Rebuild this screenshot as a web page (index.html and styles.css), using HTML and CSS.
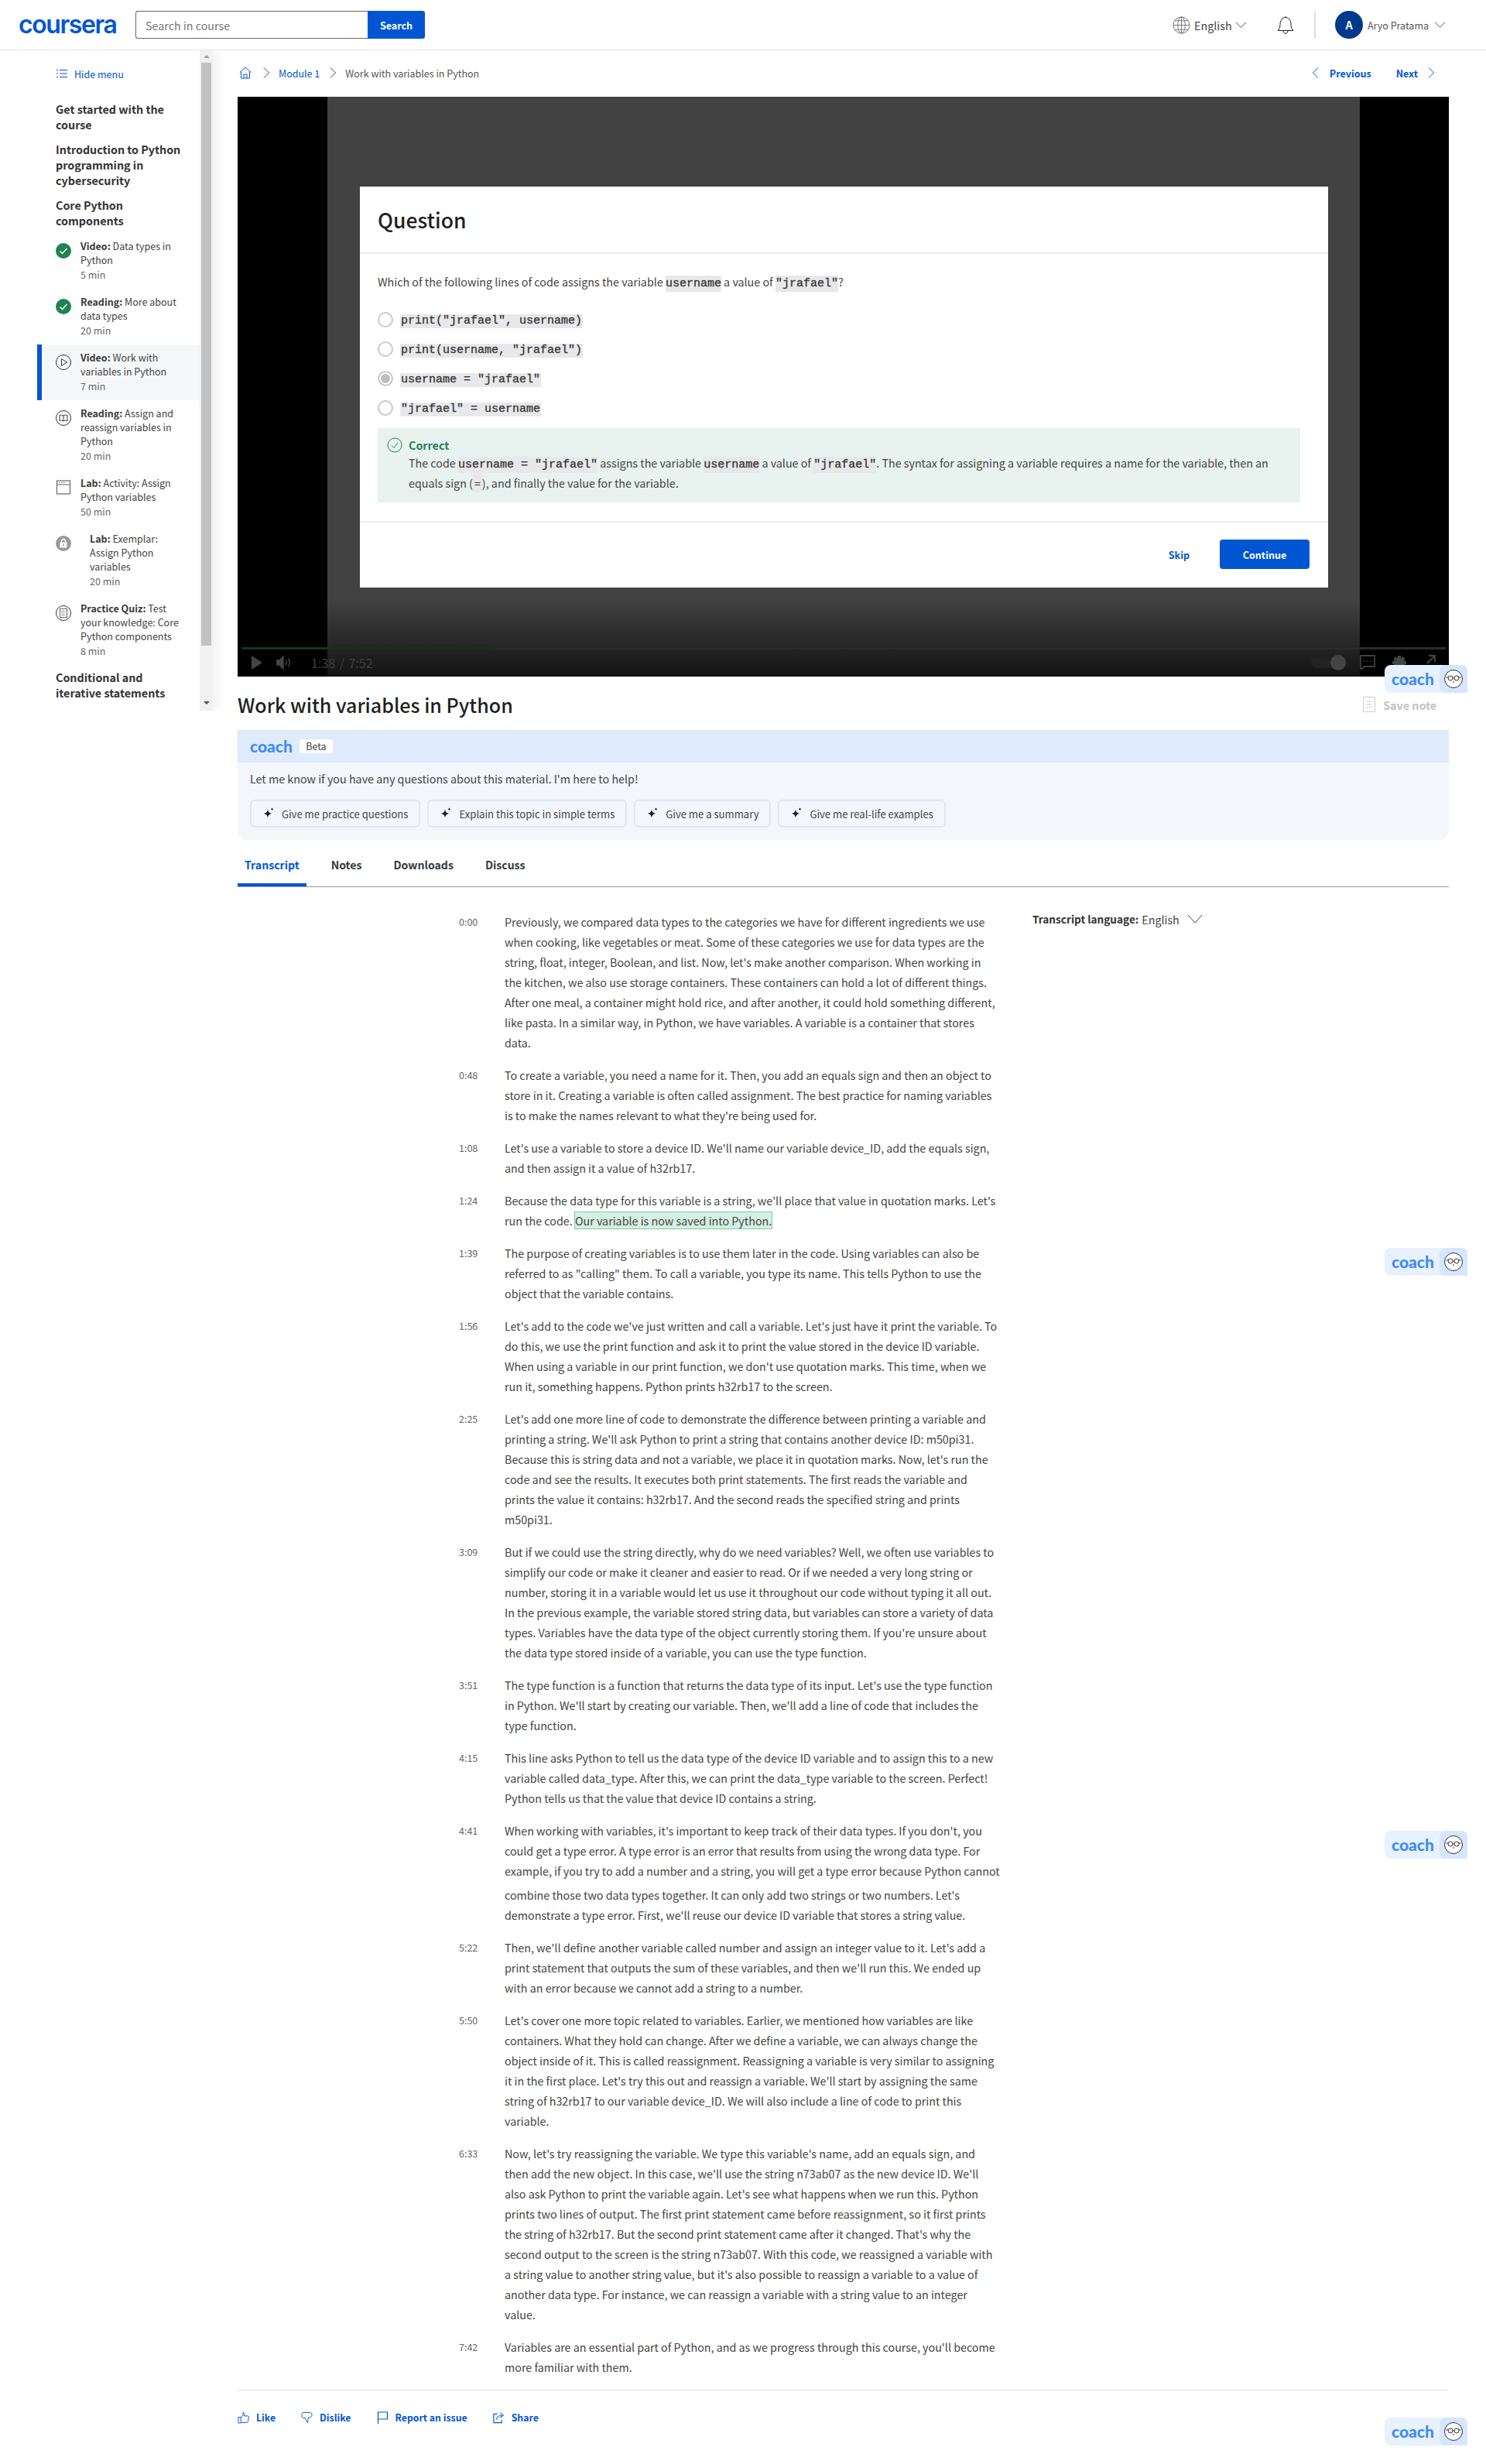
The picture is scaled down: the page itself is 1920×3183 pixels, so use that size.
FILE: index.html
```html
<!DOCTYPE html>
<html lang="en">
<head>
    <meta charset="UTF-8">
    <title>Work with variables in Python | Coursera</title>
    <link rel="stylesheet" href="styles.css">
</head>
<body>
    <!-- Top bar -->
    <header class="topbar">
        <div class="brand">coursera</div>
        <form class="search">
            <input class="search-input" type="text" placeholder="Search in course">
            <button class="search-btn" type="button">Search</button>
        </form>
        <div class="top-right">
            <svg class="globe" viewBox="0 0 24 24" fill="none" stroke="#777" stroke-width="1"><circle cx="12" cy="12" r="11"/><ellipse cx="12" cy="12" rx="5" ry="11"/><path d="M12 1v22M1 12h22M3 6h18M3 18h18"/></svg>
            <span class="lang-name">English</span>
            <svg class="chev-down" viewBox="0 0 16 10" fill="none" stroke="#444"><path d="M1 1.5l7 7 7-7"/></svg>
            <svg class="bell" viewBox="0 0 22 24" fill="none" stroke="#222" stroke-width="1"><path d="M1 19.500h20c-2-2-3-4-3-8 0-5-3-9-7-9s-7 4-7 9c0 4-1 6-3 8zM8 19.500c0 5 6 5 6 0M11 2.500V1"/></svg>
            <span class="top-divider"></span>
            <span class="avatar">A</span>
            <span class="user-name">Aryo Pratama</span>
            <svg class="chev-down" viewBox="0 0 16 10" fill="none" stroke="#444"><path d="M1 1.5l7 7 7-7"/></svg>
        </div>
    </header>

    <div class="layout">
        <!-- Course menu -->
        <aside class="sidebar">
            <nav class="menu">
                <a class="hide-menu">
                    <svg viewBox="0 0 14 12" fill="none" stroke="#0056d2"><path d="M0 1.500h2M0 6h2M0 10.500h2M4 1.500h10M4 6h10M4 10.500h10"/></svg>
                    Hide menu
                </a>
                <h3 class="module first">Get started with the course</h3>
                <h3 class="module">Introduction to Python programming in cybersecurity</h3>
                <h3 class="module">Core Python components</h3>

                <ul class="items">
                    <li class="item">
                        <svg class="item-icon" viewBox="0 0 20 20"><circle cx="10" cy="10" r="10" fill="#1f8354"/><path d="M5.500 10.500l3 3 6-6.500" fill="none" stroke="#fff" stroke-width="1.500"/></svg>
                        <div><b>Video:</b> Data types in Python<span class="dur">5 min</span></div>
                    </li>
                    <li class="item">
                        <svg class="item-icon" viewBox="0 0 20 20"><circle cx="10" cy="10" r="10" fill="#1f8354"/><path d="M5.500 10.500l3 3 6-6.500" fill="none" stroke="#fff" stroke-width="1.500"/></svg>
                        <div><b>Reading:</b> More about data types<span class="dur">20 min</span></div>
                    </li>
                    <li class="item active">
                        <svg class="item-icon" viewBox="0 0 20 20" fill="none" stroke="#333"><circle cx="10" cy="10" r="9.500"/><path d="M7.500 5.500v9l7-4.500z"/></svg>
                        <div><b>Video:</b> Work with variables in Python<span class="dur">7 min</span></div>
                    </li>
                    <li class="item">
                        <svg class="item-icon" viewBox="0 0 20 20" fill="none" stroke="#333"><circle cx="10" cy="10" r="9.500"/><path d="M10 7c-1.500-1-3-1-5-.5v7c2-.5 3.500-.5 5 .5 1.500-1 3-1 5-.5v-7c-2-.5-3.500-.5-5 .5zM10 7v7"/></svg>
                        <div><b>Reading:</b> Assign and reassign variables in Python<span class="dur">20 min</span></div>
                    </li>
                    <li class="item">
                        <svg class="item-icon" viewBox="0 0 20 20" fill="none" stroke="#666" stroke-width="1.200"><rect x="1.500" y="1" width="17" height="17"/><path d="M1.500 6h17M4 3.500h1.500M7 3.500h1.500M10 3.500h1.500"/></svg>
                        <div><b>Lab:</b> Activity: Assign Python variables<span class="dur">50 min</span></div>
                    </li>
                    <li class="item locked">
                        <svg class="item-icon" viewBox="0 0 20 20"><circle cx="10" cy="10" r="10" fill="#999"/><rect x="5.500" y="8.500" width="9" height="7" fill="#fff"/><path d="M7.500 8.500V7a2.500 2.500 0 0 1 5 0v1.500" fill="none" stroke="#fff" stroke-width="1.300"/><rect x="9.300" y="10.500" width="1.400" height="2.500" fill="#999"/></svg>
                        <div><b>Lab:</b> Exemplar: Assign Python variables<span class="dur">20 min</span></div>
                    </li>
                    <li class="item">
                        <svg class="item-icon" viewBox="0 0 20 20" fill="none" stroke="#333"><circle cx="10" cy="10" r="9.500"/><rect x="5.500" y="4.500" width="9" height="11" stroke="#666"/><path d="M7.500 7.500h5M7.500 10h5M7.500 12.500h5" stroke="#666" stroke-dasharray="1.500 .7"/></svg>
                        <div><b>Practice Quiz:</b> Test your knowledge: Core Python components<span class="dur">8 min</span></div>
                    </li>
                </ul>

                <h3 class="module last">Conditional and iterative statements</h3>
            </nav>
            <div class="scrollbar">
                <span class="arrow-up"></span>
                <span class="thumb"></span>
                <span class="arrow-down"></span>
            </div>
        </aside>

        <main class="content">
            <div class="crumbs">
                <svg class="home" viewBox="0 0 16 16" fill="none" stroke="#0056d2"><path d="M.8 7.500L8 1l7.200 6.500M2.500 6.500v8.500h11V6.500M6 15v-5h4v5"/></svg>
                <svg class="chev-right" viewBox="0 0 8 14" fill="none" stroke="#444"><path d="M1 .5l6.500 6.500L1 13.500"/></svg>
                <a class="crumb-link">Module 1</a>
                <svg class="chev-right" viewBox="0 0 8 14" fill="none" stroke="#444"><path d="M1 .5l6.500 6.500L1 13.500"/></svg>
                <span class="crumb-here">Work with variables in Python</span>
                <div class="pager">
                    <svg class="chev-right" viewBox="0 0 8 14" fill="none" stroke="#0056d2"><path d="M7 .5L.5 7 7 13.500"/></svg>
                    <a class="pager-prev">Previous</a>
                    <a class="pager-next">Next</a>
                    <svg class="chev-right" viewBox="0 0 8 14" fill="none" stroke="#0056d2"><path d="M1 .5l6.500 6.500L1 13.500"/></svg>
                </div>
            </div>

            <!-- Video with question over it -->
            <section class="video">
                <div class="stage">
                    <div class="dialog">
                        <h2 class="dialog-title">Question</h2>
                        <div class="dialog-body">
                            <p class="ask">Which of the following lines of code assigns the variable <code>username</code> a value of <code>"jrafael"</code>?</p>
                            <div class="option"><span class="radio"></span><code>print("jrafael", username)</code></div>
                            <div class="option"><span class="radio"></span><code>print(username, "jrafael")</code></div>
                            <div class="option"><span class="radio checked"></span><code>username = "jrafael"</code></div>
                            <div class="option"><span class="radio"></span><code>"jrafael" = username</code></div>
                            <div class="feedback">
                                <svg class="ok" viewBox="0 0 20 20" fill="none" stroke="#1f8354"><circle cx="10" cy="10" r="9"/><path d="M6 10.500l3 3 5-6.500"/></svg>
                                <div>
                                    <div class="ok-title">Correct</div>
                                    <p>The code <code>username = "jrafael"</code> assigns the variable <code>username</code> a value of <code>"jrafael"</code>. The syntax for assigning a variable requires a name for the variable, then an equals sign (<code class="eq">=</code>), and finally the value for the variable.</p>
                                </div>
                            </div>
                        </div>
                        <div class="dialog-foot">
                            <a class="skip">Skip</a>
                            <button class="continue" type="button">Continue</button>
                        </div>
                    </div>
                </div>
                <div class="controls">
                    <div class="progress"><span class="progress-done"></span></div>
                    <div class="ctl-row">
                        <svg class="ctl-play" viewBox="0 0 14 18" fill="#444"><path d="M0 0l14 9-14 9z"/></svg>
                        <svg class="ctl-vol" viewBox="0 0 20 18" fill="none" stroke="#444" stroke-width="1.500"><path d="M0 6h4l5-5v16l-5-5H0z" fill="#444"/><path d="M12 6c1.500 2 1.500 4 0 6M15 3.500c3 3 3 8 0 11"/></svg>
                        <span class="ctl-time">1:38 / 7:52</span>
                        <span class="ctl-right">
                            <span class="toggle"><span class="toggle-knob"></span></span>
                            <svg class="ctl-cc" viewBox="0 0 20 20" fill="none" stroke="#555" stroke-width="1.300"><path d="M1 1h18v14H6l-3 3H1zM5 8h1M9 8h1M13 8h1"/></svg>
                            <svg class="ctl-gear" viewBox="0 0 18 18" fill="#444"><path d="M7 0h4l.5 3 2.500-1.500L16.500 4 15 6.500l3 .5v4l-3 .5 1.500 2.500-2.500 2.500-2.500-1.500-.5 3H7l-.5-3L4 16.500 1.500 14 3 11.500 0 11V7l3-.5L1.500 4 4 1.500 6.500 3z"/></svg>
                            <svg class="ctl-full" viewBox="0 0 14 14" fill="none" stroke="#444" stroke-width="2"><path d="M5 1h8v8M13 1L3 11"/></svg>
                        </span>
                    </div>
                </div>
            </section>

            <div class="title-row">
                <h1>Work with variables in Python</h1>
                <span class="save-note">
                    <svg viewBox="0 0 16 20" fill="none" stroke="#ccc"><rect x=".5" y=".5" width="15" height="19"/><path d="M4 6h8M4 10h8M4 14h8"/></svg>
                    Save note
                </span>
            </div>

            <!-- Coach panel -->
            <section class="coach">
                <div class="coach-head"><span class="coach-word">coach</span><span class="beta">Beta</span></div>
                <div class="coach-body">
                    <p class="coach-msg">Let me know if you have any questions about this material. I'm here to help!</p>
                    <div class="coach-btns">
                        <button class="coach-btn" type="button"><svg viewBox="0 0 14 16"><path class="spark" d="M6 2.500c.5 3 1.500 4.500 5 5.500-3.500 1-4.500 2.500-5 5.500-.5-3-1.500-4.500-5-5.500 3.500-1 4.500-2.500 5-5.500zM11.500 0c.2 1.200.6 1.800 2 2.200-1.400.4-1.800 1-2 2.200-.2-1.200-.6-1.800-2-2.200 1.400-.4 1.800-1 2-2.200z"/></svg>Give me practice questions</button>
                        <button class="coach-btn" type="button"><svg viewBox="0 0 14 16"><path class="spark" d="M6 2.500c.5 3 1.500 4.500 5 5.500-3.500 1-4.500 2.500-5 5.500-.5-3-1.500-4.500-5-5.500 3.500-1 4.500-2.500 5-5.500zM11.500 0c.2 1.200.6 1.800 2 2.200-1.400.4-1.800 1-2 2.200-.2-1.200-.6-1.800-2-2.200 1.400-.4 1.800-1 2-2.200z"/></svg>Explain this topic in simple terms</button>
                        <button class="coach-btn" type="button"><svg viewBox="0 0 14 16"><path class="spark" d="M6 2.500c.5 3 1.500 4.500 5 5.500-3.500 1-4.500 2.500-5 5.500-.5-3-1.500-4.500-5-5.500 3.500-1 4.500-2.500 5-5.500zM11.500 0c.2 1.200.6 1.800 2 2.200-1.400.4-1.800 1-2 2.200-.2-1.200-.6-1.800-2-2.200 1.400-.4 1.800-1 2-2.200z"/></svg>Give me a summary</button>
                        <button class="coach-btn" type="button"><svg viewBox="0 0 14 16"><path class="spark" d="M6 2.500c.5 3 1.500 4.500 5 5.500-3.500 1-4.500 2.500-5 5.500-.5-3-1.500-4.500-5-5.500 3.500-1 4.500-2.500 5-5.500zM11.500 0c.2 1.200.6 1.800 2 2.200-1.400.4-1.800 1-2 2.200-.2-1.200-.6-1.800-2-2.200 1.400-.4 1.800-1 2-2.200z"/></svg>Give me real-life examples</button>
                    </div>
                </div>
            </section>

            <div class="tabs">
                <a class="tab active">Transcript</a>
                <a class="tab">Notes</a>
                <a class="tab">Downloads</a>
                <a class="tab">Discuss</a>
            </div>

            <!-- Transcript -->
            <section class="transcript">
                <div class="lines">
                    <div class="line"><span class="stamp">0:00</span><p>Previously, we compared data types to the categories we have for different ingredients we use when cooking, like vegetables or meat. Some of these categories we use for data types are the string, float, integer, Boolean, and list. Now, let's make another comparison. When working in<br>the kitchen, we also use storage containers. These containers can hold a lot of different things.<br>After one meal, a container might hold rice, and after another, it could hold something different,<br>like pasta. In a similar way, in Python, we have variables. A variable is a container that stores<br>data.</p></div>
                    <div class="line"><span class="stamp">0:48</span><p>To create a variable, you need a name for it. Then, you add an equals sign and then an object to store in it. Creating a variable is often called assignment. The best practice for naming variables<br>is to make the names relevant to what they're being used for.</p></div>
                    <div class="line"><span class="stamp">1:08</span><p>Let's use a variable to store a device ID. We'll name our variable device_ID, add the equals sign, and then assign it a value of h32rb17.</p></div>
                    <div class="line"><span class="stamp">1:24</span><p>Because the data type for this variable is a string, we'll place that value in quotation marks. Let's run the code. <mark>Our variable is now saved into Python.</mark></p></div>
                    <div class="line"><span class="stamp">1:39</span><p>The purpose of creating variables is to use them later in the code. Using variables can also be referred to as "calling" them. To call a variable, you type its name. This tells Python to use the object that the variable contains.</p></div>
                    <div class="line"><span class="stamp">1:56</span><p>Let's add to the code we've just written and call a variable. Let's just have it print the variable. To do this, we use the print function and ask it to print the value stored in the device ID variable. When using a variable in our print function, we don't use quotation marks. This time, when we run it, something happens. Python prints h32rb17 to the screen.</p></div>
                    <div class="line"><span class="stamp">2:25</span><p>Let's add one more line of code to demonstrate the difference between printing a variable and printing a string. We'll ask Python to print a string that contains another device ID: m50pi31. Because this is string data and not a variable, we place it in quotation marks. Now, let's run the code and see the results. It executes both print statements. The first reads the variable and<br>prints the value it contains: h32rb17. And the second reads the specified string and prints<br>m50pi31.</p></div>
                    <div class="line"><span class="stamp">3:09</span><p>But if we could use the string directly, why do we need variables? Well, we often use variables to simplify our code or make it cleaner and easier to read. Or if we needed a very long string or number, storing it in a variable would let us use it throughout our code without typing it all out. In the previous example, the variable stored string data, but variables can store a variety of data types. Variables have the data type of the object currently storing them. If you're unsure about the data type stored inside of a variable, you can use the type function.</p></div>
                    <div class="line"><span class="stamp">3:51</span><p>The type function is a function that returns the data type of its input. Let's use the type function in Python. We'll start by creating our variable. Then, we'll add a line of code that includes the type function.</p></div>
                    <div class="line"><span class="stamp">4:15</span><p>This line asks Python to tell us the data type of the device ID variable and to assign this to a new variable called data_type. After this, we can print the data_type variable to the screen. Perfect! Python tells us that the value that device ID contains a string.</p></div>
                    <div class="line"><span class="stamp">4:41</span><p>When working with variables, it's important to keep track of their data types. If you don't, you could get a type error. A type error is an error that results from using the wrong data type. For example, if you try to add a number and a string, you will get a type error because Python cannot <span class="seam">combine those two data types together. It can only add two strings or two numbers. Let's demonstrate a type error. First, we'll reuse our device ID variable that stores a string value.</span></p></div>
                    <div class="line"><span class="stamp">5:22</span><p>Then, we'll define another variable called number and assign an integer value to it. Let's add a print statement that outputs the sum of these variables, and then we'll run this. We ended up with an error because we cannot add a string to a number.</p></div>
                    <div class="line"><span class="stamp">5:50</span><p>Let's cover one more topic related to variables. Earlier, we mentioned how variables are like containers. What they hold can change. After we define a variable, we can always change the object inside of it. This is called reassignment. Reassigning a variable is very similar to assigning it in the first place. Let's try this out and reassign a variable. We'll start by assigning the same string of h32rb17 to our variable device_ID. We will also include a line of code to print this variable.</p></div>
                    <div class="line"><span class="stamp">6:33</span><p>Now, let's try reassigning the variable. We type this variable's name, add an equals sign, and<br>then add the new object. In this case, we'll use the string n73ab07 as the new device ID. We'll<br>also ask Python to print the variable again. Let's see what happens when we run this. Python<br>prints two lines of output. The first print statement came before reassignment, so it first prints<br>the string of h32rb17. But the second print statement came after it changed. That's why the<br>second output to the screen is the string n73ab07. With this code, we reassigned a variable with<br>a string value to another string value, but it's also possible to reassign a variable to a value of<br>another data type. For instance, we can reassign a variable with a string value to an integer<br>value.</p></div>
                    <div class="line"><span class="stamp">7:42</span><p>Variables are an essential part of Python, and as we progress through this course, you'll become more familiar with them.</p></div>
                </div>
                <div class="lang-pick">
                    <b>Transcript language:</b><span class="lang-value">English</span>
                    <svg class="chev-lang" viewBox="0 0 20 12" fill="none" stroke="#444"><path d="M1 1l9 10 9-10"/></svg>
                </div>
            </section>

            <div class="actions">
                <a class="action"><svg viewBox="0 0 16 16" fill="none" stroke="#0056d2"><path d="M1 7.500h3.500v8H1zM4.500 8L7.500 4.500V.8c1.500 0 2 1.500 1.500 5h5.500c1 0 1 1 .8 2l-1 5.500c-.2 1.200-.8 1.700-2 1.700h-7.300"/></svg>Like</a>
                <a class="action"><svg viewBox="0 0 16 16" fill="none" stroke="#0056d2"><path d="M3 1h9c1.500 0 3 1 3 3s-1.500 4-4 4H10l-1 7-3-4.500V8.500H3C1.500 8.500 1 7 1 5s.5-4 2-4z"/></svg>Dislike</a>
                <a class="action"><svg viewBox="0 0 14 16" fill="none" stroke="#0056d2" stroke-width="1.200"><path d="M1 16V1h12v9H1"/></svg>Report an issue</a>
                <a class="action"><svg viewBox="0 0 16 16" fill="none" stroke="#0056d2" stroke-width="1.200"><path d="M6 3H1v12h11v-4M5 11c0-4 3-6 7-6M10 1.500L14 5l-4 3"/></svg>Share</a>
            </div>
        </main>
    </div>

    <!-- Coach launcher, repeats down the page -->
    <div class="pill pill-1"><span class="coach-word">coach</span><span class="pill-face"><svg viewBox="0 0 24 24" fill="#fff" stroke="#333"><circle cx="12" cy="12" r="11.500"/><circle cx="8" cy="11" r="3" fill="none"/><circle cx="16" cy="11" r="3" fill="none"/><path d="M11 11h2M5 10H2.500M19 10h2.500M11 16h2" fill="none"/></svg></span></div>
    <div class="pill pill-2"><span class="coach-word">coach</span><span class="pill-face"><svg viewBox="0 0 24 24" fill="#fff" stroke="#333"><circle cx="12" cy="12" r="11.500"/><circle cx="8" cy="11" r="3" fill="none"/><circle cx="16" cy="11" r="3" fill="none"/><path d="M11 11h2M5 10H2.500M19 10h2.500M11 16h2" fill="none"/></svg></span></div>
    <div class="pill pill-3"><span class="coach-word">coach</span><span class="pill-face"><svg viewBox="0 0 24 24" fill="#fff" stroke="#333"><circle cx="12" cy="12" r="11.500"/><circle cx="8" cy="11" r="3" fill="none"/><circle cx="16" cy="11" r="3" fill="none"/><path d="M11 11h2M5 10H2.500M19 10h2.500M11 16h2" fill="none"/></svg></span></div>
    <div class="pill pill-4"><span class="coach-word">coach</span><span class="pill-face"><svg viewBox="0 0 24 24" fill="#fff" stroke="#333"><circle cx="12" cy="12" r="11.500"/><circle cx="8" cy="11" r="3" fill="none"/><circle cx="16" cy="11" r="3" fill="none"/><path d="M11 11h2M5 10H2.500M19 10h2.500M11 16h2" fill="none"/></svg></span></div>
</body>
</html>
```

FILE: styles.css
```css
* {
    box-sizing: border-box;
}
body {
    margin: 0;
    height: 3183px;
    position: relative;
    overflow: hidden;
    background: #fff;
    color: #333;
    font-family: "Noto Sans CJK SC", "Noto Sans", sans-serif;
    font-size: 14.3px;
}
h1, h2, h3, p, ul {
    margin: 0;
    padding: 0;
}
a {
    color: #0056d2;
}
code {
    font-family: "Liberation Mono", monospace;
    font-size: 15px;
    line-height: 1;
    color: #333;
    -webkit-text-stroke: .3px #333;
    background: #e8e8ea;
    padding: 2px 0;
}

/* top bar */
.topbar {
    height: 65px;
    display: flex;
    align-items: center;
    padding-left: 24px;
    border-bottom: 1px solid #e5e5e5;
}
.brand {
    width: 151px;
    color: #0056d2;
    font-family: Inter, sans-serif;
    font-size: 32px;
    font-weight: 600;
    letter-spacing: -1.4px;
    line-height: 36px;
}
.search {
    display: flex;
    height: 36px;
}
.search-input {
    width: 300px;
    border: 1px solid #666;
    border-right: 0;
    border-radius: 3px 0 0 3px;
    padding: 0 12px;
    font: 14.3px "Noto Sans CJK SC", sans-serif;
}
.search-input::placeholder {
    color: #777;
}
.search-btn {
    width: 74px;
    border: 0;
    border-radius: 0 3px 3px 0;
    background: #0056d2;
    color: #fff;
    font: 600 12.5px "Noto Sans CJK SC", sans-serif;
}
.top-right {
    margin-left: auto;
    padding-right: 52px;
    display: flex;
    align-items: center;
    color: #444;
}
.globe {
    width: 23px;
    height: 23px;
    margin-right: 5px;
}
.lang-name {
    width: 53px;
}
.chev-down {
    width: 15px;
    height: 10px;
}
.bell {
    width: 22px;
    height: 24px;
    margin-left: 39px;
}
.top-divider {
    width: 2px;
    height: 36px;
    background: #e1e1e1;
    margin: 0 25px 0 26px;
}
.avatar {
    width: 36px;
    height: 36px;
    border-radius: 50%;
    background: #00398c;
    color: #fff;
    font-weight: 600;
    font-size: 14.3px;
    line-height: 36px;
    text-align: center;
}
.user-name {
    font-size: 12.5px;
    margin-left: 6px;
    width: 86px;
    white-space: nowrap;
    color: #555;
}

/* left column */
.layout {
    display: flex;
}
.sidebar {
    width: 275px;
    height: 853px;
    flex: none;
    display: flex;
    box-shadow: 8px 0 12px rgba(0, 0, 0, .05);
    clip-path: inset(0 -30px 0 0);
}
.menu {
    width: 258px;
    padding: 20px 0 0 0;
    overflow: hidden;
}
.hide-menu {
    display: flex;
    align-items: center;
    gap: 9px;
    margin-left: 73px;
    height: 20px;
    font-size: 12.5px;
}
.hide-menu svg {
    width: 14px;
    height: 12px;
}
.module {
    margin: 12px 0 0 72px;
    padding-right: 16px;
    font-size: 14.3px;
    font-weight: 600;
    line-height: 20px;
    color: #333;
}
.module.first {
    margin-top: 26px;
}
.module.last {
    margin-top: 6px;
    padding-right: 40px;
}
.items {
    list-style: none;
    margin-top: 6px;
}
.item {
    display: flex;
    margin-left: 48px;
    padding: 8px 26px 8px 24px;
    font-size: 12.5px;
    line-height: 18px;
    font-weight: 400;
    color: #444;
}
.item b {
    font-weight: 600;
    color: #373a3c;
}
.item.active {
    background: #f5f7f8;
    border-left: 6px solid #0056d2;
    padding-left: 18px;
}
.item-icon {
    width: 20px;
    height: 20px;
    flex: none;
    margin: 5px 12px 0 0;
}
.item.locked .item-icon {
    margin-right: 24px;
}
.dur {
    display: block;
    line-height: 20px;
    color: #666;
}
.scrollbar {
    width: 17px;
    height: 853px;
    background: #f1f1f1;
    display: flex;
    flex-direction: column;
    align-items: center;
}
.thumb {
    width: 13px;
    height: 753px;
    background: #c1c1c1;
    flex: none;
}
.arrow-up, .arrow-down {
    width: 0;
    height: 0;
    border-left: 4px solid transparent;
    border-right: 4px solid transparent;
}
.arrow-up {
    border-bottom: 4px solid #a3a3a3;
    margin: 6px 0 6px;
}
.arrow-down {
    border-top: 4px solid #505050;
    margin-top: 72px;
}

/* main column */
.content {
    width: 1565px;
    margin-left: 32px;
}
.crumbs {
    height: 60px;
    padding-bottom: 2px;
    display: flex;
    align-items: center;
    font-size: 12.5px;
}
.home {
    width: 16px;
    height: 16px;
    margin: 0 15px 0 2px;
}
.chev-right {
    width: 8px;
    height: 14px;
}
.crumb-link {
    margin: 0 13px 0 12px;
}
.crumb-here {
    margin-left: 12px;
    color: #555;
}
.pager {
    margin-left: auto;
    margin-right: 19px;
    display: flex;
    align-items: center;
    font-weight: 600;
}
.pager-prev {
    margin: 0 32px 0 14px;
}
.pager-next {
    margin-right: 13px;
}

/* video */
.video {
    position: relative;
    height: 749px;
    background: #000;
    padding: 0 115px 0 116px;
}
.stage {
    height: 100%;
    background: #424242;
    padding: 116px 41px 0 42px;
}
.dialog {
    height: 518px;
    background: #fff;
}
.dialog-title {
    height: 87px;
    padding: 0 23px;
    border-bottom: 2px solid #eee;
    font-size: 26.5px;
    font-weight: 500;
    line-height: 85px;
    color: #1f1f1f;
}
.dialog-body {
    height: 347px;
    padding: 0 36px 0 23px;
    border-bottom: 2px solid #eee;
}
.ask {
    padding-top: 24px;
    height: 68px;
    line-height: 24px;
    color: #444;
}
.option {
    display: flex;
    align-items: center;
    height: 38px;
}
.option code {
    padding: 0 1px;
    line-height: 18px;
}
.radio {
    width: 20px;
    height: 20px;
    border: 2px solid #c9c9c9;
    border-radius: 50%;
    margin: -4px 9px 0 0;
    background: #fff;
}
.radio.checked {
    background: #bdbdbd;
    box-shadow: inset 0 0 0 2px #fff;
}
.feedback {
    display: flex;
    height: 96px;
    margin-top: 5px;
    padding: 12px 20px 0 12px;
    background: #e8f2ef;
}
.ok {
    width: 20px;
    height: 20px;
    flex: none;
    margin-right: 8px;
}
.ok-title {
    color: #1f8354;
    font-weight: 600;
    font-size: 14.3px;
    line-height: 20px;
}
.feedback p {
    line-height: 26px;
    color: #444;
}
.eq {
    font-family: "Noto Sans CJK SC", sans-serif;
    font-size: 14.3px;
    -webkit-text-stroke: 0;
    padding: 2px;
}
.dialog-foot {
    height: 84px;
    padding: 0 24px 2px 0;
    display: flex;
    align-items: center;
    justify-content: flex-end;
}
.skip {
    font-weight: 600;
    font-size: 12.5px;
    margin-right: 39px;
}
.continue {
    width: 116px;
    height: 38px;
    border: 0;
    border-radius: 4px;
    background: #0056d2;
    color: #fff;
    font: 600 12.5px "Noto Sans CJK SC", sans-serif;
}

/* player controls, dimmed by the overlay */
.controls {
    position: absolute;
    left: 0;
    right: 0;
    bottom: 0;
    height: 100px;
    padding: 62px 4px 0 5px;
    background: linear-gradient(rgba(0, 0, 0, 0), rgba(0, 0, 0, .72));
}
.progress {
    height: 3px;
    background: #2b2b2b;
}
.progress-done {
    display: block;
    width: 326px;
    height: 3px;
    background: #17331f;
}
.ctl-row {
    display: flex;
    align-items: center;
    height: 34px;
    padding-left: 13px;
}
.ctl-play {
    width: 14px;
    height: 18px;
}
.ctl-vol {
    width: 20px;
    height: 18px;
    margin-left: 18px;
}
.ctl-time {
    margin-left: 25px;
    font-size: 16px;
    word-spacing: 2px;
    color: #3f3f3f;
}
.ctl-right {
    margin-left: auto;
    display: flex;
    align-items: center;
}
.toggle {
    display: flex;
    justify-content: flex-end;
    align-items: center;
    width: 45px;
    height: 14px;
    border-radius: 7px;
    background: #222;
}
.toggle-knob {
    width: 20px;
    height: 20px;
    border-radius: 50%;
    background: #444;
}
.ctl-cc {
    width: 20px;
    height: 20px;
    margin-left: 18px;
}
.ctl-gear {
    width: 18px;
    height: 18px;
    margin-left: 22px;
}
.ctl-full {
    width: 14px;
    height: 14px;
    margin: -6px 13px 0 24px;
}

/* title row */
.title-row {
    height: 69px;
    padding-top: 3px;
    display: flex;
    align-items: center;
}
h1 {
    font-size: 25px;
    font-weight: 500;
    color: #1f1f1f;
}
.save-note {
    margin-left: auto;
    margin-right: 16px;
    display: flex;
    align-items: center;
    gap: 10px;
    font-weight: 600;
    font-size: 14.3px;
    color: #c2c2c2;
}
.save-note svg {
    width: 16px;
    height: 20px;
}

/* coach panel */
.coach {
    height: 142px;
    border-radius: 0 0 12px 12px;
    background: #f3f6fa;
    overflow: hidden;
}
.coach-head {
    height: 42px;
    padding-left: 16px;
    display: flex;
    align-items: center;
    background: #dfeafb;
}
.coach-word {
    font-family: Lato, sans-serif;
    font-weight: 900;
    font-size: 21px;
    line-height: 24px;
    color: #3d8cf5;
}
.beta {
    margin-left: 9px;
    width: 43px;
    height: 18px;
    border-radius: 3px;
    background: #fff;
    font-size: 12.5px;
    line-height: 18px;
    text-align: center;
    color: #444;
}
.coach-body {
    padding: 0 16px;
}
.coach-msg {
    padding-top: 9px;
    line-height: 24px;
    height: 48px;
    color: #444;
}
.coach-btns {
    display: flex;
    gap: 9px;
}
.coach-btn {
    display: flex;
    align-items: center;
    height: 36px;
    padding: 0 14px 0 15px;
    border: 2px solid #e1e6f2;
    border-radius: 6px;
    background: #f3f6fa;
    font: 13.1px "Noto Sans CJK SC", sans-serif;
    color: #444;
}
.coach-btn svg {
    width: 14px;
    height: 16px;
    margin-right: 10px;
}
.spark {
    fill: #222;
}

/* tabs */
.tabs {
    margin-top: 14px;
    height: 47px;
    display: flex;
    border-bottom: 1px solid #999;
}
.tab {
    padding: 6px 9px 0;
    margin-right: 23px;
    font-weight: 600;
    font-size: 14.1px;
    line-height: 24px;
    color: #373a3c;
}
.tab.active {
    color: #0056d2;
    border-bottom: 4px solid #0056d2;
    border-radius: 2px 2px 0 0;
    height: 46px;
}

/* transcript */
.transcript {
    display: flex;
    padding: 32px 0 0 286px;
}
.lines {
    width: 710px;
}
.line {
    display: flex;
    margin-bottom: 16px;
}
.stamp {
    width: 59px;
    flex: none;
    font-size: 12.5px;
    line-height: 26px;
    color: #666;
}
.line p {
    width: 644px;
    line-height: 26px;
    color: #444;
}
/* the capture has a 5px jump here */
.seam {
    display: block;
    margin-top: 5px;
}
mark {
    background: #d5f0e3;
    color: #444;
    outline: 1px solid #7bcfa5;
}
.lang-pick {
    margin-left: 31px;
    margin-top: -3px;
    display: flex;
    align-items: center;
    height: 24px;
    color: #444;
}
.lang-pick b {
    font-size: 13.6px;
    font-weight: 600;
    color: #333;
}
.lang-value {
    margin-left: 4px;
}
.chev-lang {
    width: 20px;
    height: 12px;
    margin-left: 10px;
}

/* bottom actions */
.actions {
    height: 70px;
    display: flex;
    align-items: center;
    gap: 33px;
    border-top: 1px solid #e5e5e5;
}
.action {
    display: flex;
    align-items: center;
    gap: 9px;
    font-size: 12.3px;
    font-weight: 600;
}
.action svg {
    width: 15px;
    height: 16px;
}

/* floating coach button */
.pill {
    position: absolute;
    left: 1789px;
    width: 107px;
    height: 36px;
    display: flex;
    align-items: center;
    justify-content: space-between;
    padding-left: 9px;
    border-radius: 8px 8px 0 8px;
    background: #e8f1fe;
    overflow: hidden;
}
.pill-1 {
    top: 859px;
}
.pill-2 {
    top: 1612px;
}
.pill-3 {
    top: 2365px;
}
.pill-4 {
    top: 3123px;
}
.pill-face {
    width: 36px;
    height: 36px;
    display: flex;
    align-items: center;
    justify-content: center;
    background: #d6e6fe;
    border-radius: 8px 0 0 8px;
}
.pill-face svg {
    width: 24px;
    height: 24px;
}
```
